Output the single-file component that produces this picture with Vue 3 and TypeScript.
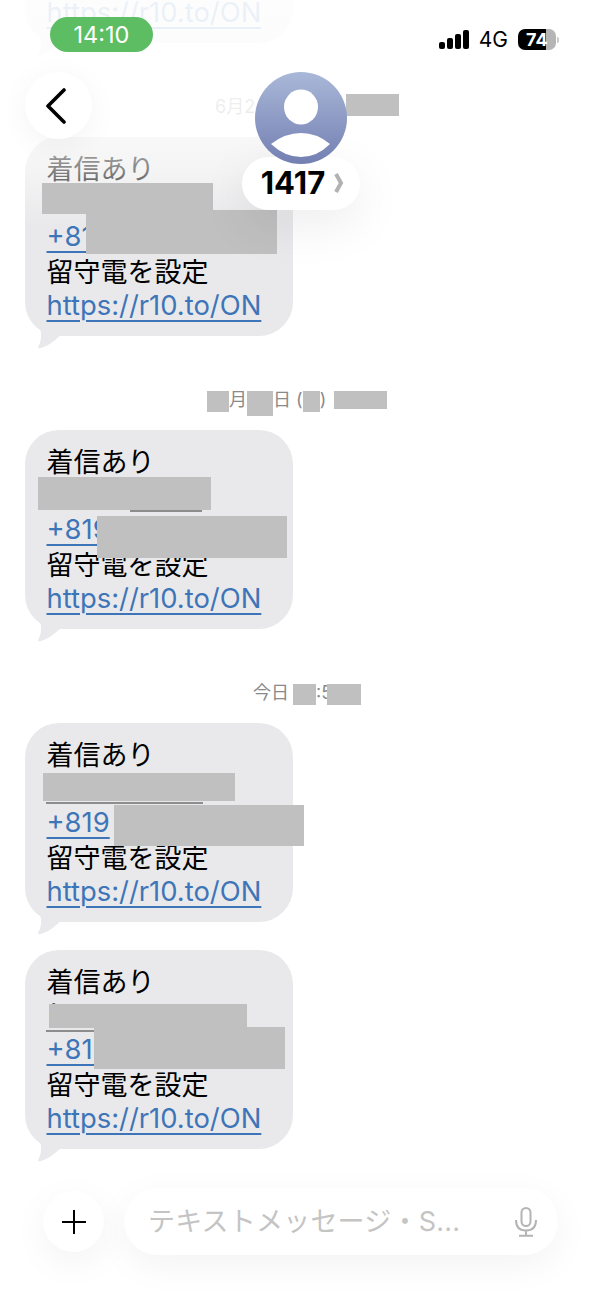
<script setup lang="ts">
interface Mask {
  x: number
  y: number
  w: number
  h: number
  line?: boolean
}

interface Message {
  id: number
  sender: string
  masks: Mask[]
}

// rectangles are measured from the bubble's top left corner
const messages: Message[] = [
  { id: 0, sender: '\u00a0', masks: [] },
  {
    id: 1,
    sender: '\u00a0',
    masks: [
      { x: 17, y: 46, w: 171, h: 31 },
      { x: 61, y: 73, w: 191, h: 44 },
    ],
  },
  {
    id: 2,
    sender: '\u00a0',
    masks: [
      { x: 13, y: 47, w: 173, h: 33 },
      { x: 105, y: 80, w: 72, h: 2, line: true },
      { x: 72, y: 86, w: 190, h: 42 },
    ],
  },
  {
    id: 3,
    sender: '\u00a0',
    masks: [
      { x: 18, y: 50, w: 192, h: 28 },
      { x: 21, y: 79, w: 157, h: 2, line: true },
      { x: 89, y: 82, w: 190, h: 41 },
    ],
  },
  {
    id: 4,
    sender: '(',
    masks: [
      { x: 24, y: 54, w: 198, h: 24 },
      { x: 21, y: 80, w: 48, h: 2, line: true },
      { x: 69, y: 77, w: 191, h: 42 },
    ],
  },
]

const findMessage = (id: number) => messages.find((m) => m.id === id) as Message

function maskStyle(mask: Mask) {
  return {
    left: `${mask.x}px`,
    top: `${mask.y}px`,
    width: `${mask.w}px`,
    height: `${mask.h}px`,
  }
}

const rows = [
  { date: null, ids: [0] },
  { date: 'june', ids: [1] },
  { date: 'month', ids: [2] },
  { date: 'today', ids: [3, 4] },
]
</script>

<template>
  <div class="screen">
    <div class="thread">
      <section v-for="row in rows" :key="row.ids[0]" class="group">
        <div v-if="row.date === 'june'" class="date date-june">
          <span>6月2</span>
          <i class="block block-june"></i>
        </div>
        <div v-else-if="row.date === 'month'" class="date date-month">
          <i class="block block-m1"></i>
          <span>月</span>
          <i class="block block-m2"></i>
          <span>日 (</span>
          <i class="block block-m3"></i>
          <span>)</span>
          <i class="block block-m4"></i>
        </div>
        <div v-else-if="row.date === 'today'" class="date date-today">
          <span>今日</span>
          <i class="block block-t1"></i>
          <span>:5</span>
          <i class="block block-t2"></i>
        </div>

        <div class="stack">
          <article v-for="id in row.ids" :key="id" class="bubble">
            <!-- the bubble above the first date is scrolled off, only its link shows -->
            <template v-if="id !== 0">
              <p class="jp">着信あり</p>
              <p class="sender">{{ findMessage(id).sender }}</p>
              <p><a>+819</a></p>
              <p class="jp">留守電を設定</p>
            </template>
            <p><a>https://r10.to/ON</a></p>
            <span
              v-for="(mask, index) in findMessage(id).masks"
              :key="index"
              class="mask"
              :class="{ 'mask-line': mask.line }"
              :style="maskStyle(mask)"
            ></span>
            <svg class="tail" width="28" height="26" viewBox="0 0 28 26" aria-hidden="true">
              <path d="M4 4C6 14 5 19 2 24Q2 26 5 25C12 23 18 18 24 13L24 4Z" fill="#e9e9eb" />
            </svg>
          </article>
        </div>
      </section>
    </div>

    <div class="composer">
      <button class="plus" type="button" aria-label="add">
        <svg width="26" height="26" viewBox="0 0 26 26" aria-hidden="true">
          <path d="M13 1V25M1 13H25" stroke="#000" stroke-width="2" fill="none" />
        </svg>
      </button>
      <div class="input">
        <span class="placeholder">テキストメッセージ・S...</span>
        <svg class="mic" width="24" height="30" viewBox="0 0 24 30" aria-hidden="true">
          <rect x="7.5" y="1" width="9" height="18" rx="4.5" fill="none" stroke="#b4b4b4" stroke-width="2" />
          <path d="M2 13C2 20 6 23.5 12 23.5S22 20 22 13M12 23.5V28.5M5 28.8H19" fill="none" stroke="#b4b4b4" stroke-width="2" />
        </svg>
      </div>
    </div>

    <div class="fade"></div>

    <header class="header">
      <div class="status">
        <div class="clock">14:10</div>
        <div class="indicators">
          <div class="signal">
            <i></i>
            <i></i>
            <i></i>
            <i></i>
          </div>
          <span class="network">4G</span>
          <div class="battery"><span>74</span></div>
          <i class="battery-tip"></i>
        </div>
      </div>

      <div class="nav">
        <button class="back" type="button" aria-label="back">
          <svg width="24" height="36" viewBox="0 0 24 36" aria-hidden="true">
            <path d="M20 2L4 18L20 34" fill="none" stroke="#000" stroke-width="3.6" stroke-linecap="round" stroke-linejoin="round" />
          </svg>
        </button>
        <div class="contact">
          <div class="avatar">
            <svg width="92" height="92" viewBox="0 0 92 92" aria-hidden="true">
              <defs>
                <linearGradient id="avatarFill" x1="0" y1="0" x2="0" y2="1">
                  <stop offset="0" stop-color="#a9b8d8" />
                  <stop offset="1" stop-color="#737fb2" />
                </linearGradient>
              </defs>
              <circle cx="46" cy="46" r="46" fill="url(#avatarFill)" />
              <ellipse cx="46" cy="35" rx="17" ry="17.5" fill="#fff" />
              <path d="M16 72Q30 61 46 61Q62 61 75 72Q62 85 46 85Q30 85 16 72Z" fill="#fff" />
            </svg>
          </div>
          <div class="name">
            <strong>1417</strong>
            <svg width="10" height="22" viewBox="0 0 10 22" aria-hidden="true">
              <path d="M2 2L7 11L2 20" fill="none" stroke="#b2b2b2" stroke-width="4" />
            </svg>
          </div>
        </div>
      </div>
    </header>
  </div>
</template>

<style scoped>
.screen {
  position: relative;
  width: 600px;
  height: 1298px;
  overflow: hidden;
  background: #fff;
  font-family: Inter, "Noto Sans CJK JP", sans-serif;
  color: #000;
}

.thread {
  margin-top: -156px;
  padding-left: 25px;
}

.group + .group {
  margin-top: 55px;
}

.date {
  display: flex;
  align-items: flex-start;
  height: 39px;
  font-size: 18px;
  line-height: 18px;
  color: #8a8a8a;
}

.date span {
  white-space: pre;
}

.date-june {
  padding-left: 190px;
}

.date-month {
  padding-left: 182px;
}

.date-today {
  padding-left: 228px;
}

.block {
  position: relative;
  z-index: 2;
  display: block;
  flex: none;
  background: #c0c0c0;
}

.block-june {
  width: 53px;
  height: 22px;
  margin-left: 91px;
  margin-top: -4px;
}

.block-m1 {
  width: 22px;
  height: 21px;
}

.block-m2 {
  width: 26px;
  height: 25px;
}

.block-m3 {
  width: 17px;
  height: 21px;
}

.block-m4 {
  width: 53px;
  height: 18px;
  margin-left: 8px;
}

.block-t1 {
  width: 23px;
  height: 21px;
  margin-left: 4px;
}

.block-t2 {
  width: 34px;
  height: 21px;
  margin-left: -5px;
}

.stack {
  display: flex;
  flex-direction: column;
  gap: 28px;
}

.bubble {
  position: relative;
  display: flex;
  flex-direction: column;
  justify-content: flex-end;
  box-sizing: border-box;
  width: 268px;
  height: 199px;
  padding: 16px 21.5px 13px;
  border-radius: 34px;
  background: #e9e9eb;
  font-size: 27px;
  line-height: 34px;
}

.bubble p {
  margin: 0;
  white-space: nowrap;
}

.bubble .jp {
  padding-top: 3px;
  line-height: 31px;
}

.bubble a {
  color: #3e75b8;
  font-size: 27.4px;
  text-decoration: underline;
  text-decoration-thickness: 2px;
  text-underline-offset: 5px;
}

.sender {
  color: #555;
}

.mask {
  position: absolute;
  z-index: 2;
  background: #c0c0c0;
}

.mask-line {
  background: #8d8d8d;
}

.tail {
  position: absolute;
  left: 11px;
  bottom: -13px;
}

.composer {
  display: flex;
  align-items: center;
  gap: 20px;
  margin-top: 39px;
  padding-left: 43px;
}

.plus {
  display: flex;
  align-items: center;
  justify-content: center;
  width: 61px;
  height: 61px;
  padding: 0;
  border: 0;
  border-radius: 50%;
  background: #fff;
  box-shadow: 0 10px 36px rgba(0, 0, 0, 0.05);
}

.input {
  display: flex;
  align-items: center;
  justify-content: space-between;
  box-sizing: border-box;
  width: 434px;
  height: 67px;
  padding: 0 20px 0 24px;
  border-radius: 34px;
  background: #fff;
  box-shadow: 0 10px 36px rgba(0, 0, 0, 0.05);
}

.placeholder {
  font-size: 27px;
  letter-spacing: 0.2px;
  line-height: 34px;
  color: #c4c4c4;
  white-space: nowrap;
}

.fade {
  position: absolute;
  z-index: 1;
  top: 0;
  left: 0;
  width: 100%;
  height: 225px;
  pointer-events: none;
  background: linear-gradient(
    to bottom,
    rgba(255, 255, 255, 0.9) 0,
    rgba(255, 255, 255, 0.85) 110px,
    rgba(255, 255, 255, 0.52) 170px,
    rgba(255, 255, 255, 0) 225px
  );
}

.header {
  position: absolute;
  z-index: 3;
  top: 0;
  left: 0;
  width: 100%;
}

.status {
  display: flex;
  align-items: flex-start;
  justify-content: space-between;
  padding: 17px 41px 0 50px;
}

.clock {
  width: 103px;
  height: 35px;
  border-radius: 18px;
  background: #5cbd63;
  color: #fff;
  font-size: 23.5px;
  line-height: 35px;
  text-align: center;
}

.indicators {
  display: flex;
  align-items: center;
  height: 21px;
  margin-top: 12px;
}

.signal {
  display: flex;
  align-items: flex-end;
  gap: 2px;
  height: 19px;
}

.signal i {
  display: block;
  width: 6px;
  border-radius: 2px;
  background: #000;
}

.signal i:nth-child(1) {
  height: 7px;
}

.signal i:nth-child(2) {
  height: 11px;
}

.signal i:nth-child(3) {
  height: 15px;
}

.signal i:nth-child(4) {
  height: 19px;
}

.network {
  margin-left: 10px;
  font-size: 21px;
  line-height: 21px;
}

.battery {
  box-sizing: border-box;
  width: 38px;
  height: 21px;
  margin-left: 10px;
  padding-left: 8px;
  border-radius: 7px;
  background: linear-gradient(90deg, #000 74%, #b5b5b5 74%);
  color: #fff;
  font-size: 18px;
  font-weight: 700;
  line-height: 21px;
}

.battery-tip {
  display: block;
  width: 2px;
  height: 6px;
  margin-left: 1px;
  border-radius: 0 2px 2px 0;
  background: #c8c8c8;
}

.nav {
  display: flex;
  align-items: flex-start;
  margin-top: 20px;
  padding-left: 25px;
}

.back {
  display: flex;
  align-items: center;
  justify-content: center;
  width: 67px;
  height: 67px;
  padding: 0 6px 0 0;
  border: 0;
  border-radius: 50%;
  background: #fff;
  box-shadow: 0 6px 30px rgba(0, 0, 0, 0.05);
}

.contact {
  display: flex;
  flex-direction: column;
  align-items: center;
  width: 118px;
  margin-left: 150px;
}

.avatar {
  position: relative;
  z-index: 1;
  width: 92px;
  height: 92px;
}

.avatar svg {
  display: block;
}

.name {
  display: flex;
  align-items: center;
  justify-content: center;
  gap: 9px;
  box-sizing: border-box;
  width: 118px;
  height: 53px;
  margin-top: -7px;
  padding: 0 0 2px 3px;
  border-radius: 27px;
  background: #fff;
  box-shadow: 0 14px 50px rgba(0, 0, 0, 0.08);
}

.name strong {
  font-size: 31px;
  font-weight: 700;
  line-height: 36px;
}
</style>
